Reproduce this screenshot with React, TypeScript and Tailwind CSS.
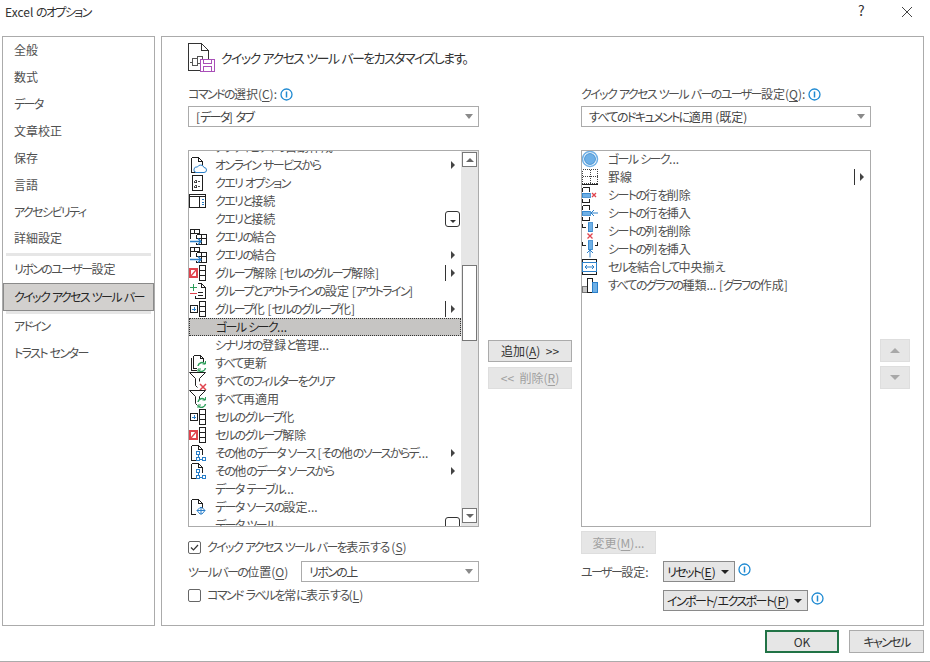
import React from "react";

const INK = "#1f1f1f";
const BLUE = "#2a7fc9";
const RED = "#e0444e";
const GREEN = "#2e9e5b";

function K({ t }: { t: string }) {
  const parts = t.split(/([\u3000-\u30ff]+)/);
  return (
    <>
      {parts.map((p, i) =>
        i % 2 === 1 ? (
          <span key={i} className="tracking-[-1.6px]">{p}</span>
        ) : (
          <React.Fragment key={i}>{p}</React.Fragment>
        )
      )}
    </>
  );
}

function S({ children, w = 22, h = 18 }: { children: React.ReactNode; w?: number; h?: number }) {
  return (
    <svg width={w} height={h} viewBox={`0 0 ${w} ${h}`} fill="none" shapeRendering="crispEdges" className="block shrink-0">
      {children}
    </svg>
  );
}
const Doc = () => <path d="M2.500 1.500h7l4 4v5M2.500 1.500v15h4M9.500 1.500v4h4" stroke={INK} />;
const Funnel = () => <path d="M.5 .5h16l-6 6v3M6.500 6.500l-6-6M6.500 6.500v7l2 2" stroke={INK} shapeRendering="auto" />;
const Refresh = () => (
  <g shapeRendering="auto" stroke={GREEN} strokeWidth="1.500">
    <path d="M9 12a4 4 0 0 1 7-2M16.500 14a4 4 0 0 1-7 2" />
    <path d="M16.500 7v3h-3M9 18v-3h3" strokeWidth="1" />
  </g>
);
const GroupBars = () => <path d="M10.500 1.500h6v15h-6zM10.500 6.500h6M10.500 11.500h6" stroke={INK} />;
const Nodes = () => (
  <g stroke={BLUE}>
    <rect x="7.500" y="7.500" width="3" height="3" />
    <rect x="7.500" y="13.500" width="3" height="3" />
    <rect x="13.500" y="13.500" width="3" height="3" />
    <path d="M9 10.500v3M10.500 15h3" />
  </g>
);
const Merge = () => (
  <>
    <path d="M1.500 1.500h9v4h-9zM1.500 5.500v5M5.500 1.500v4M7.500 6.500h10v10h-10v-2M7.500 6.500v4M12.500 6.500v10M7.500 10h10" stroke={INK} />
    <path d="M1 13.500h11M9 10.500l3 3-3 3" stroke={BLUE} strokeWidth="1.300" shapeRendering="auto" />
  </>
);
const Ungroup = () => (
  <>
    <rect x="1" y="5" width="7" height="8" fill="#fff" stroke={RED} strokeWidth="1.300" />
    <path d="M2 12l5-6" stroke={RED} strokeWidth="1.300" shapeRendering="auto" />
    <GroupBars />
  </>
);
const GroupAdd = () => (
  <>
    <rect x="1.500" y="5.500" width="7" height="7" stroke={INK} />
    <path d="M3 9h4M5 7v4" stroke={BLUE} />
    <GroupBars />
  </>
);

const icons: Record<string, React.ReactNode> = {
  online: (
    <S>
      <Doc />
      <path d="M7 16.500h8a2.500 2.500 0 0 0 0-5 3.500 3.500 0 0 0-6.500-.5 2.800 2.800 0 0 0-1.500 5.500z" fill="#fff" stroke={BLUE} shapeRendering="auto" />
    </S>
  ),
  option: (
    <S>
      <rect x="3.500" y="1.500" width="10" height="15" stroke={INK} />
      <path d="M5.500 6.500h2v2h-2zM5.500 11.500h2v2h-2zM9 7.500h2M9 12.500h2" stroke={INK} strokeWidth="0.800" />
    </S>
  ),
  conn: (
    <S>
      <rect x="0.500" y="2.500" width="16" height="13" stroke={INK} />
      <path d="M0.500 4.500h16M10.500 4.500v11" stroke={INK} />
      <path d="M12.500 7.500h2M12.500 10h2M12.500 12.500h2" stroke={BLUE} />
    </S>
  ),
  merge: (
    <S>
      <Merge />
    </S>
  ),
  ungroup: (
    <S>
      <Ungroup />
    </S>
  ),
  outline: (
    <S>
      <path d="M8.500 1.500h4l4 4v11h-10v-3M12.500 1.500v4h4M9 10.500h5M9 13.500h5" stroke={INK} />
      <path d="M1 5.500h7M4.500 2v7" stroke={GREEN} />
      <path d="M1 11.500h7" stroke={RED} />
    </S>
  ),
  group: (
    <S>
      <GroupAdd />
    </S>
  ),
  refresh: (
    <S>
      <path d="M4.500 1.500h7l3 3v3M4.500 1.500v13h3M2.500 3.500v13h5M11.500 1.500v3h3" stroke={INK} />
      <Refresh />
    </S>
  ),
  clear: (
    <S w={24}>
      <Funnel />
      <path d="M11 12l6 6M17 12l-6 6" stroke={RED} strokeWidth="1.500" shapeRendering="auto" />
    </S>
  ),
  reapply: (
    <S w={24}>
      <Funnel />
      <Refresh />
    </S>
  ),
  source: (
    <S>
      <Doc />
      <Nodes />
    </S>
  ),
  settings: (
    <S>
      <Doc />
      <path d="M8 12.500l3-3h2l3 3-3 3.500h-2z M8 12.500h8M12 9.500v6.500" fill="#fff" stroke={BLUE} shapeRendering="auto" />
    </S>
  ),
  goal: (
    <S>
      <circle cx="8" cy="9" r="7.500" stroke="#6fb0e6" strokeWidth="1.500" shapeRendering="auto" />
      <circle cx="8" cy="9" r="5.500" fill="#6fb0e6" stroke={BLUE} strokeWidth="0.700" shapeRendering="auto" />
    </S>
  ),
  border: (
    <S>
      <path d="M.5 1.500h15v14h-15zM8 1.500v14M.5 8.500h15" stroke="#444" strokeDasharray="1 1" />
      <path d="M0 16.500h16" stroke={INK} />
    </S>
  ),
  delRow: (
    <S>
      <path d="M.5 1.500h7v4M7.500 12.500v4h-7M.5 1.500v4M.5 12.500v4" stroke={INK} />
      <rect x="0" y="7" width="8" height="4" fill="#6fb0e6" stroke={BLUE} strokeWidth="0.800" />
      <path d="M10 7l4 4M14 7l-4 4" stroke={RED} strokeWidth="1.300" shapeRendering="auto" />
    </S>
  ),
  insRow: (
    <S>
      <path d="M.5 1.500h7v4M7.500 12.500v4h-7M.5 1.500v4M.5 12.500v4" stroke={INK} />
      <rect x="0" y="7" width="8" height="4" fill="#6fb0e6" stroke={BLUE} strokeWidth="0.800" />
      <path d="M9 9h7M12 6l-3 3 3 3" stroke={BLUE} shapeRendering="auto" />
    </S>
  ),
  delCol: (
    <S>
      <path d="M.5 1.500v4h3M15.500 1.500v4h-3" stroke={INK} />
      <rect x="6" y="0.500" width="4" height="9" fill="#6fb0e6" stroke={BLUE} strokeWidth="0.800" />
      <path d="M5.500 11.500l5 5M10.500 11.500l-5 5" stroke={RED} strokeWidth="1.300" shapeRendering="auto" />
    </S>
  ),
  insCol: (
    <S>
      <path d="M.5 1.500v4h3M15.500 1.500v4h-3" stroke={INK} />
      <rect x="6" y="0.500" width="4" height="9" fill="#6fb0e6" stroke={BLUE} strokeWidth="0.800" />
      <path d="M8 10.500v7M5 13l3-3 3 3" stroke={BLUE} shapeRendering="auto" />
    </S>
  ),
  center: (
    <S>
      <rect x=".5" y="1.500" width="14" height="15" stroke={INK} />
      <rect x=".5" y="4.500" width="14" height="9" fill="#fff" stroke={BLUE} />
      <path d="M3 9h9M5 7l-2 2 2 2M10 7l2 2-2 2" stroke={BLUE} shapeRendering="auto" />
    </S>
  ),
  chart: (
    <S>
      <rect x=".5" y="10.500" width="5" height="6" fill="#c8c8c8" stroke="#777" />
      <rect x="5.500" y="2.500" width="5" height="14" fill="#fff" stroke={INK} />
      <rect x="10.500" y="6.500" width="5" height="10" fill="#6fb0e6" stroke={BLUE} />
    </S>
  ),
};

const Arrow = () => <span className="w-0 h-0 border-y-[4px] border-y-transparent border-l-[4px] border-l-[#444] block" />;

function Trail({ t }: { t?: string }) {
  if (t === "arrow")
    return (
      <span className="w-[16px] pl-[6px] flex items-center shrink-0">
        <Arrow />
      </span>
    );
  if (t === "split")
    return (
      <span className="w-[16px] flex items-center gap-[5px] shrink-0">
        <span className="w-px h-[16px] bg-[#333] block" />
        <Arrow />
      </span>
    );
  if (t === "gallery")
    return (
      <span className="w-[16px] flex items-center shrink-0">
        <span className="w-[15px] h-[16px] border border-[#333] rounded-[3px] flex items-end justify-center pb-[3px]">
          <span className="w-0 h-0 border-x-[3px] border-x-transparent border-t-[3px] border-t-[#333] block" />
        </span>
      </span>
    );
  return <span className="w-[16px] shrink-0" />;
}

function Row({ icon, text, trail, selected }: { icon?: string; text: string; trail?: string; selected?: boolean }) {
  return (
    <div
      className={
        "h-[18px] flex items-center shrink-0 whitespace-nowrap " +
        (selected ? "bg-[#c6c5c3] border border-dotted border-[#333] text-[#262626]" : "")
      }
    >
      <span className="w-[26px] shrink-0 overflow-hidden">{icon ? icons[icon] : null}</span>
      <span className="flex-1 min-w-0"><K t={text} /></span>
      <Trail t={trail} />
    </div>
  );
}

const leftRows = [
  { icon: "", text: "アクティビティの自動作成" },
  { icon: "online", text: "オンライン サービスから", trail: "arrow" },
  { icon: "option", text: "クエリ オプション" },
  { icon: "conn", text: "クエリと接続" },
  { icon: "", text: "クエリと接続", trail: "gallery" },
  { icon: "merge", text: "クエリの結合" },
  { icon: "merge", text: "クエリの結合", trail: "arrow" },
  { icon: "ungroup", text: "グループ解除 [セルのグループ解除]", trail: "split" },
  { icon: "outline", text: "グループとアウトラインの設定 [アウトライン]" },
  { icon: "group", text: "グループ化 [セルのグループ化]", trail: "split" },
  { icon: "", text: "ゴール シーク...", selected: true },
  { icon: "", text: "シナリオの登録と管理..." },
  { icon: "refresh", text: "すべて更新" },
  { icon: "clear", text: "すべてのフィルターをクリア" },
  { icon: "reapply", text: "すべて再適用" },
  { icon: "group", text: "セルのグループ化" },
  { icon: "ungroup", text: "セルのグループ解除" },
  { icon: "source", text: "その他のデータ ソース [その他のソースからデ...", trail: "arrow" },
  { icon: "source", text: "その他のデータ ソースから", trail: "arrow" },
  { icon: "", text: "データ テーブル..." },
  { icon: "settings", text: "データ ソースの設定..." },
  { icon: "", text: "データ ツール", trail: "gallery" },
];

const rightRows = [
  { icon: "goal", text: "ゴール シーク..." },
  { icon: "border", text: "罫線", trail: "split" },
  { icon: "delRow", text: "シートの行を削除" },
  { icon: "insRow", text: "シートの行を挿入" },
  { icon: "delCol", text: "シートの列を削除" },
  { icon: "insCol", text: "シートの列を挿入" },
  { icon: "center", text: "セルを結合して中央揃え" },
  { icon: "chart", text: "すべてのグラフの種類... [グラフの作成]" },
];

const nav1 = ["全般", "数式", "データ", "文章校正", "保存", "言語", "アクセシビリティ", "詳細設定"];

function Info() {
  return (
    <svg width="13" height="13" viewBox="0 0 13 13" fill="none" className="block shrink-0">
      <circle cx="6.500" cy="6.500" r="5.500" stroke="#1f8ad2" strokeWidth="1.300" />
      <path d="M6.500 3.500v6" stroke="#1f8ad2" strokeWidth="1.500" />
    </svg>
  );
}

function Combo({ text, w }: { text: string; w: string }) {
  return (
    <div className={"h-[21px] border border-[#ababab] bg-white flex items-center pl-[7px] pr-[5px] justify-between text-[#444] shrink-0 " + w}>
      <span><K t={text} /></span>
      <span className="w-0 h-0 border-x-[4px] border-x-transparent border-t-[5px] border-t-[#8a8a8a] block" />
    </div>
  );
}

function U({ children }: { children: React.ReactNode }) {
  return <span className="underline underline-offset-2">{children}</span>;
}

function ScrollBtn({ up }: { up?: boolean }) {
  return (
    <div className="h-[15px] w-[15px] border border-[#777] bg-white flex items-center justify-center shrink-0">
      <span
        className={
          "w-0 h-0 border-x-[4px] border-x-transparent block " +
          (up ? "border-b-[4px] border-b-[#666]" : "border-t-[4px] border-t-[#666]")
        }
      />
    </div>
  );
}

function Check({ on }: { on?: boolean }) {
  return (
    <span className="w-[13px] h-[13px] border border-[#666] rounded-[2px] flex items-center justify-center shrink-0">
      {on && (
        <svg width="9" height="9" viewBox="0 0 9 9" fill="none">
          <path d="M1 4.500l2.500 2.500L8 2" stroke="#333" strokeWidth="1.200" />
        </svg>
      )}
    </span>
  );
}

function SideMove({ up }: { up?: boolean }) {
  return (
    <div className="w-[30px] h-[23px] bg-[#e6e6e6] border border-[#dedede] flex items-center justify-center">
      <span
        className={
          "w-0 h-0 border-x-[5px] border-x-transparent block " +
          (up ? "border-b-[5px] border-b-[#a8a8a8]" : "border-t-[5px] border-t-[#a8a8a8]")
        }
      />
    </div>
  );
}

function DropBtn({ w, children }: { w: string; children: React.ReactNode }) {
  return (
    <div className={"h-[21px] bg-[#e6e6e6] border border-[#8a8a8a] flex items-center justify-between pl-[3px] pr-[5px] text-[#222] whitespace-nowrap shrink-0 " + w}>
      <span>{children}</span>
      <span className="w-0 h-0 border-x-[4px] border-x-transparent border-t-[4px] border-t-[#222] block" />
    </div>
  );
}

export default function App() {
  return (
    <div className="w-[930px] h-[662px] bg-white flex flex-col overflow-hidden text-[12px] leading-[18px] text-[#505050] font-['Noto_Sans_CJK_JP','Noto_Sans',sans-serif] [font-feature-settings:'palt']">
      {/* title bar */}
      <div className="h-[36px] flex items-start shrink-0 text-[#333]">
        <span className="pl-[5px] pt-[3px] flex-1"><K t="Excel のオプション" /></span>
        <span className="w-[12px] mt-[1px] mr-[31px] text-[14px] text-[#333]">?</span>
        <svg width="12" height="12" viewBox="0 0 12 12" className="mt-[6px] mr-[17px]" fill="none">
          <path d="M1 1l10 10M11 1L1 11" stroke="#444" />
        </svg>
      </div>

      {/* main */}
      <div className="h-[590px] flex pl-[2px] pr-[6px] gap-[6px] shrink-0">
        {/* nav */}
        <nav className="w-[153px] border border-[#ababab] flex flex-col whitespace-nowrap shrink-0">
          {nav1.map((n) => (
            <div key={n} className="h-[26.86px] pl-[11px] flex items-center shrink-0"><span><K t={n} /></span></div>
          ))}
          <div className="h-[3px] mt-[1px] mx-[3px] bg-[#e6e6e6] shrink-0" />
          <div className="h-[27px] pl-[11px] flex items-center shrink-0"><span><K t="リボンのユーザー設定" /></span></div>
          <div className="h-[28px] bg-[#d2d0ce] border border-[#8a8a8a] pl-[10px] flex items-center text-[#262626] shrink-0"><span><K t="クイック アクセス ツール バー" /></span></div>
          <div className="h-[3px] mx-[3px] bg-[#e6e6e6] shrink-0" />
          <div className="h-[27px] pl-[11px] mt-[-1px] flex items-center shrink-0"><span><K t="アドイン" /></span></div>
          <div className="h-[27px] pl-[11px] flex items-center shrink-0"><span><K t="トラスト センター" /></span></div>
        </nav>

        {/* content */}
        <section className="flex-1 border border-[#ababab] pl-[26px] flex">
          {/* left column */}
          <div className="w-[291px] flex flex-col shrink-0">
            <div className="h-[34px] flex items-center pt-[7px] shrink-0">
              <svg width="28" height="29" viewBox="0 0 28 29" fill="none" className="block shrink-0" shapeRendering="crispEdges">
                <path d="M.5 28V.5h13l7 7v9M13.500.5v7h7M.5 27.500h12" stroke="#333" />
                <path d="M4.500 15.500h5v7h-5zM9.500 13.500h5v7h-5zM2 19h3" stroke="#555" />
                <rect x="12.500" y="16.500" width="14" height="12" fill="#fff" stroke="#a94fb8" />
                <path d="M15.500 16.500v4h8v-4M15.500 28.500v-5h8v5" stroke="#a94fb8" />
              </svg>
              <span className="ml-[5px] pt-[1px] text-[13px] text-[#333] whitespace-nowrap"><K t="クイック アクセス ツール バーをカスタマイズします。" /></span>
            </div>
            <div className="h-[18px] mt-[14px] flex items-center gap-[3px] shrink-0">
              <span><K t="コマンドの選択" />(<U>C</U>):</span>
              <Info />
            </div>
            <div className="mt-[3px]">
              <Combo text="[データ] タブ" w="w-full" />
            </div>
            <div className="h-[377px] mt-[23px] border border-[#ababab] flex shrink-0 overflow-hidden">
              <div className="flex-1 min-w-0 overflow-hidden">
                <div className="flex flex-col mt-[-13px]">
                  {leftRows.map((r, i) => (
                    <Row key={i} icon={r.icon} text={r.text} trail={r.trail} selected={r.selected} />
                  ))}
                </div>
              </div>
              <div className="w-[17px] bg-[#e6e6e6] flex flex-col pl-[1px] pt-[1px] pb-[3px] shrink-0">
                <ScrollBtn up />
                <div className="h-[98px] shrink-0" />
                <div className="h-[76px] w-[15px] bg-white border border-[#777] shrink-0" />
                <div className="flex-1" />
                <ScrollBtn />
              </div>
            </div>
            <div className="h-[18px] mt-[11px] flex items-center shrink-0">
              <Check on />
              <span className="ml-[6px]"><K t="クイック アクセス ツール バーを表示する" /> (<U>S</U>)</span>
            </div>
            <div className="mt-[5px] flex items-center shrink-0">
              <span className="w-[113px]"><K t="ツールバーの位置" />(<U>O</U>)</span>
              <Combo text="リボンの上" w="flex-1" />
            </div>
            <div className="h-[18px] mt-[4px] flex items-center shrink-0">
              <Check />
              <span className="ml-[6px]"><K t="コマンド ラベルを常に表示する" />(<U>L</U>)</span>
            </div>
          </div>

          {/* middle */}
          <div className="w-[102px] pl-[9px] pt-[303px] flex flex-col gap-[5px] shrink-0">
            <div className="w-[84px] h-[22px] bg-[#e6e6e6] border border-[#ababab] flex items-center justify-center text-[#333]">
              <span>追加(<U>A</U>)&nbsp;&nbsp;&gt;&gt;</span>
            </div>
            <div className="w-[84px] h-[22px] bg-[#e6e6e6] border border-[#dedede] flex items-center justify-center text-[#a0a0a0]">
              <span>&lt;&lt;&nbsp;&nbsp;削除(<U>R</U>)</span>
            </div>
          </div>

          {/* right column */}
          <div className="w-[290px] flex flex-col shrink-0">
            <div className="h-[18px] mt-[48px] flex items-center gap-[3px] shrink-0 whitespace-nowrap">
              <span><K t="クイック アクセス ツール バーのユーザー設定" />(<U>Q</U>):</span>
              <Info />
            </div>
            <div className="mt-[3px]">
              <Combo text="すべてのドキュメントに適用 (既定)" w="w-full" />
            </div>
            <div className="h-[377px] mt-[23px] border border-[#ababab] overflow-hidden shrink-0">
              <div className="flex flex-col mt-[-1px]">
                {rightRows.map((r, i) => (
                  <Row key={i} icon={r.icon} text={r.text} trail={r.trail} />
                ))}
              </div>
            </div>
            <div className="w-[75px] h-[23px] mt-[4px] bg-[#e6e6e6] border border-[#dedede] flex items-center justify-center text-[#a0a0a0] shrink-0">
              <span>変更(<U>M</U>)...</span>
            </div>
            <div className="mt-[7px] flex items-center shrink-0">
              <span className="w-[82px]"><K t="ユーザー設定:" /></span>
              <DropBtn w="w-[72px]"><K t="リセット" />(<U>E</U>)</DropBtn>
              <span className="ml-[3px] mb-[5px]"><Info /></span>
            </div>
            <div className="mt-[8px] pl-[82px] flex items-center shrink-0">
              <DropBtn w="w-[145px]"><K t="インポート/エクスポート" />(<U>P</U>)</DropBtn>
              <span className="ml-[3px] mb-[5px]"><Info /></span>
            </div>
          </div>

          {/* up/down */}
          <div className="pl-[9px] pt-[302px] flex flex-col gap-[4px] shrink-0">
            <SideMove up />
            <SideMove />
          </div>
        </section>
      </div>

      {/* footer */}
      <div className="h-[36px] flex justify-end items-start pt-[4px] pr-[6px] gap-[10px] border-b border-[#ababab] shrink-0">
        <div className="w-[74px] h-[23px] bg-[#e6e6e6] border-2 border-[#217346] flex items-center justify-center text-[#333]">OK</div>
        <div className="w-[75px] h-[23px] bg-[#e6e6e6] border border-[#ababab] flex items-center justify-center text-[#333]"><span><K t="キャンセル" /></span></div>
      </div>
    </div>
  );
}
